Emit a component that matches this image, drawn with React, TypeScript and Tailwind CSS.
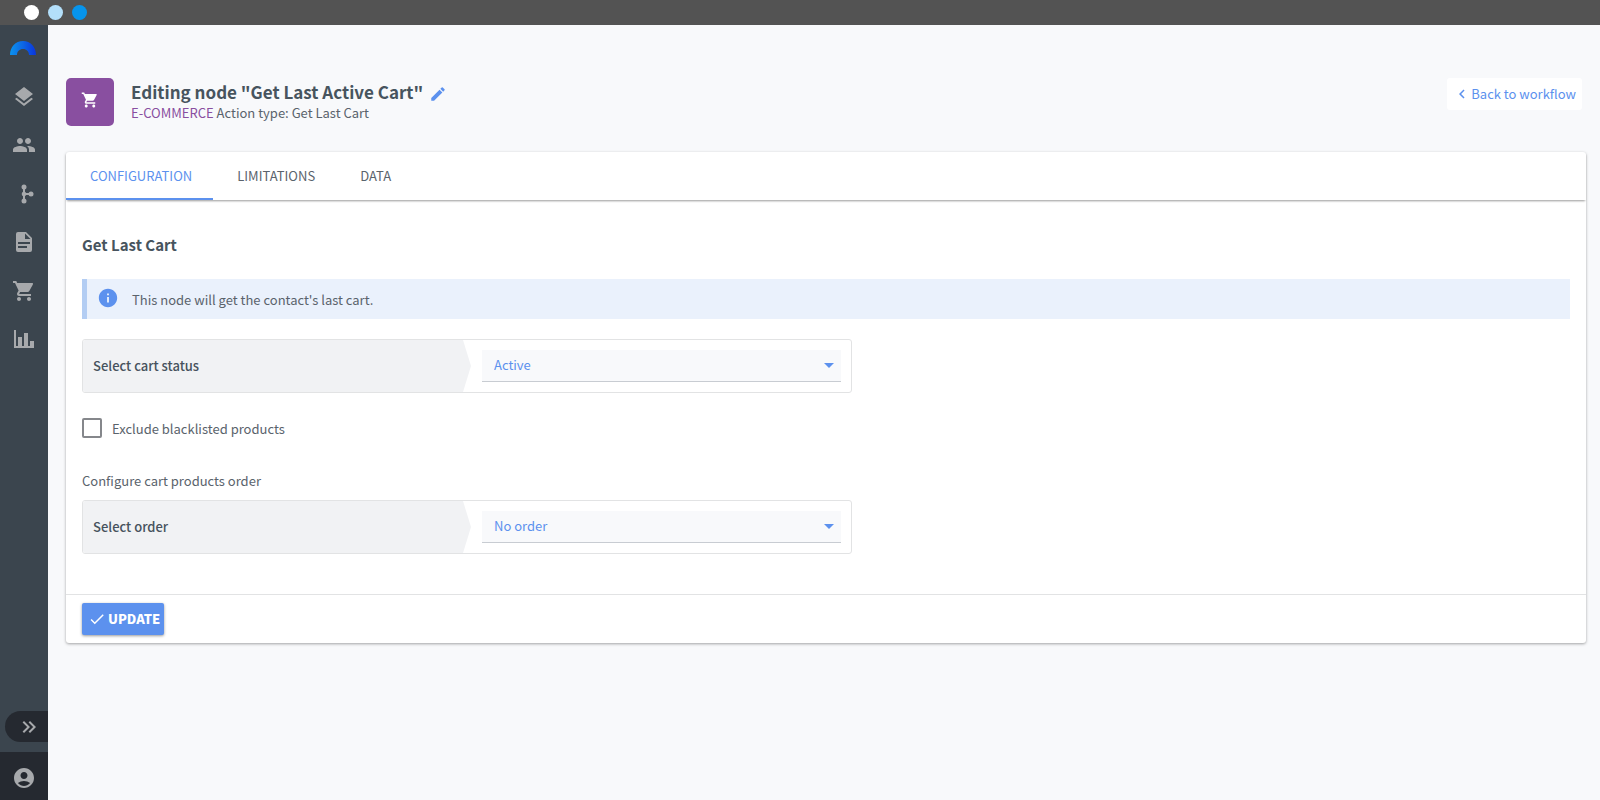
import React, { useState } from 'react';
import {
  MdAccountCircle,
  MdArrowDropDown,
  MdCheck,
  MdChevronLeft,
  MdEdit,
  MdInfo,
  MdLayers,
  MdPeople,
  MdShoppingCart
} from 'react-icons/md';

const Logo: React.FC = () => (
  <svg width="26" height="14" viewBox="0 0 26 14" aria-hidden="true">
    <defs>
      <linearGradient id="logo-arc" x1="0" y1="0" x2="1" y2="0">
        <stop offset="0" stopColor="#0b93ee" />
        <stop offset="0.5" stopColor="#0d66e4" />
        <stop offset="1" stopColor="#0a35dc" />
      </linearGradient>
    </defs>
    <path d="M0 14C0 6 5.5 0 13 0S26 6 26 14H19C19 10.500 16.500 8 13 8S7 10.500 7 14Z" fill="url(#logo-arc)" />
  </svg>
);

const BranchIcon: React.FC = () => (
  <svg width="24" height="24" viewBox="0 0 24 24" fill="currentColor" aria-hidden="true">
    <circle cx="12" cy="5" r="2.500" />
    <circle cx="12" cy="12" r="2.300" />
    <circle cx="12" cy="19" r="2.500" />
    <circle cx="19" cy="12" r="2.500" />
    <path d="M11 5h2v14h-2zM12 11h7v2h-7z" />
  </svg>
);

const DocumentIcon: React.FC = () => (
  <svg width="24" height="24" viewBox="0 0 24 24" fill="currentColor" aria-hidden="true">
    <path d="M13 9h5.500L13 3.500V9M6 2h8l6 6v12a2 2 0 0 1-2 2H6a2 2 0 0 1-2-2V4a2 2 0 0 1 2-2m9 16v-2H6v2h9m3-4v-2H6v2h12z" />
  </svg>
);

const ChartIcon: React.FC = () => (
  <svg width="24" height="24" viewBox="0 0 24 24" fill="currentColor" aria-hidden="true">
    <path d="M22 21H2V3h2v16h2v-9h4v9h2V6h4v13h2v-5h4v7z" />
  </svg>
);

const DoubleChevronIcon: React.FC = () => (
  <svg width="24" height="24" viewBox="0 0 24 24" fill="currentColor" aria-hidden="true">
    <path d="M5.590 7.410L7 6l6 6-6 6-1.410-1.410L10.170 12 5.590 7.410m6 0L13 6l6 6-6 6-1.410-1.410L16.170 12l-4.580-4.590z" />
  </svg>
);

const navItems = [
  { label: 'Content', icon: <MdLayers size={24} /> },
  { label: 'Contacts', icon: <MdPeople size={24} /> },
  { label: 'Workflows', icon: <BranchIcon /> },
  { label: 'Documents', icon: <DocumentIcon /> },
  { label: 'E-commerce', icon: <MdShoppingCart size={24} /> },
  { label: 'Analytics', icon: <ChartIcon /> }
];

const tabs = ['CONFIGURATION', 'LIMITATIONS', 'DATA'];

const Sidebar: React.FC = () => (
  <aside className="w-12 shrink-0 flex flex-col bg-[#3b454e] text-[#a7a9ac]">
    <a href="#home" aria-label="Home" className="mt-4 flex justify-center pr-[2px]">
      <Logo />
    </a>
    <nav className="mt-[30px] h-[266px] flex flex-col items-center justify-between">
      {navItems.map((item) => (
        <a key={item.label} href="#nav" aria-label={item.label}>
          {item.icon}
        </a>
      ))}
    </nav>
    <button
      aria-label="Expand menu"
      className="mt-auto mb-[10px] ml-[5px] h-[31px] flex items-center justify-center pl-1 rounded-l-full bg-[#252930]"
    >
      <DoubleChevronIcon />
    </button>
    <button aria-label="Account" className="h-12 pt-[3px] flex items-center justify-center bg-[#252930]">
      <MdAccountCircle size={24} />
    </button>
  </aside>
);

interface SelectRowProps {
  id: string;
  label: string;
  options: string[];
}

const SelectRow: React.FC<SelectRowProps> = ({ id, label, options }) => (
  <div className="flex max-w-[770px] h-[54px] border border-[#e2e3e4] rounded-[3px] overflow-hidden">
    <label
      htmlFor={id}
      className="w-[388px] shrink-0 flex items-center pl-[10px] bg-[#f1f2f4] font-medium text-[#47525d] [clip-path:polygon(0_0,calc(100%-8px)_0,100%_50%,calc(100%-8px)_100%,0_100%)]"
    >
      {label}
    </label>
    <div className="relative flex-1 my-[10px] ml-[11px] mr-[10px]">
      <select
        id={id}
        className="appearance-none w-full h-8 pb-[2px] pl-3 pr-8 bg-[#f8f9fb] border-b border-[#c8ccd2] text-[#5c91ee] outline-none"
      >
        {options.map((option) => (
          <option key={option}>{option}</option>
        ))}
      </select>
      <MdArrowDropDown size={24} className="absolute right-0 top-[3px] text-[#5c91ee] pointer-events-none" />
    </div>
  </div>
);

const App: React.FC = () => {
  const [activeTab, setActiveTab] = useState(tabs[0]);
  const [exclude, setExclude] = useState(false);

  return (
    <div className="min-h-screen flex flex-col bg-[#f8f9fb] text-[13px] leading-5 text-[#5a636c] font-['Noto_Sans_CJK_SC',sans-serif]">
      {/* window bar */}
      <div className="h-[25px] shrink-0 flex items-center gap-[9px] pl-6 bg-[#535353]">
        <span className="size-[15px] rounded-full bg-white" />
        <span className="size-[15px] rounded-full bg-[#b3dffa]" />
        <span className="size-[15px] rounded-full bg-[#0694ec]" />
      </div>

      <div className="flex-1 flex">
        <Sidebar />

        <main className="flex-1 min-w-0 pt-[53px] pl-[18px] pr-[14px]">
          <header className="flex items-start">
            <div className="size-12 shrink-0 flex items-center justify-center pb-1 rounded-[5px] bg-[#894fa0] text-white">
              <MdShoppingCart size={18} />
            </div>
            <div className="ml-[17px] flex-1">
              <div className="flex items-center gap-[6px] h-[27px]">
                <h1 className="text-[17px] leading-7 font-bold text-[#47545e]">
                  Editing node "Get Last Active Cart"
                </h1>
                <button aria-label="Rename node" className="pt-1 text-[#5c91ee]">
                  <MdEdit size={18} />
                </button>
              </div>
              <p className="leading-4">
                <span className="text-[#894fa0]">E-COMMERCE</span> Action type: Get Last Cart
              </p>
            </div>
            <a
              href="#workflow"
              className="mr-1 h-8 px-[6px] flex items-center rounded-[3px] bg-white text-[#5c91ee]"
            >
              <MdChevronLeft size={18} />
              Back to workflow
            </a>
          </header>

          <section className="mt-[26px] rounded-[3px] bg-white shadow-[0_1px_3px_rgba(0,0,0,0.35)]">
            <div role="tablist" className="flex h-12 shadow-[0_2px_2px_-1px_rgba(0,0,0,0.4)]">
              {tabs.map((tab) => (
                <button
                  key={tab}
                  role="tab"
                  aria-selected={tab === activeTab}
                  onClick={() => setActiveTab(tab)}
                  className={
                    tab === activeTab
                      ? 'pl-6 pr-[21px] pt-[2px] border-b-2 border-[#5c91ee] text-[#5c91ee]'
                      : 'pl-6 pr-[21px] pt-[2px] border-b-2 border-transparent'
                  }
                >
                  {tab}
                </button>
              ))}
            </div>

            <div className="px-4 pt-[33px] pb-10">
              <h2 className="text-[15px] leading-6 font-bold text-[#47545e]">Get Last Cart</h2>

              <div className="mt-[22px] h-10 flex items-center pt-[2px] pl-[10px] border-l-[5px] border-[#b3cdf3] bg-[#eaf1fc]">
                <MdInfo size={22} className="mb-1 text-[#5c91ee]" />
                <p className="ml-[13px]">This node will get the contact's last cart.</p>
              </div>

              <div className="mt-5">
                <SelectRow id="cart-status" label="Select cart status" options={['Active', 'Abandoned', 'Ordered']} />
              </div>

              <div className="mt-[25px] h-5 flex items-center gap-[10px]">
                <input
                  id="exclude"
                  type="checkbox"
                  checked={exclude}
                  onChange={(e) => setExclude(e.target.checked)}
                  className="appearance-none size-5 border-2 border-[#85878b] rounded-[2px] checked:bg-[#5c91ee]"
                />
                <label htmlFor="exclude" className="pt-[2px]">Exclude blacklisted products</label>
              </div>

              <p className="mt-[33px] mb-[9px]">Configure cart products order</p>
              <SelectRow id="order" label="Select order" options={['No order', 'Ascending', 'Descending']} />
            </div>

            <footer className="px-4 py-2 border-t border-[#e2e3e4]">
              <button className="h-8 pl-[6px] pr-1 flex items-center gap-[2px] rounded-[2px] bg-[#5c91ee] text-white font-black shadow-[0_1px_3px_rgba(0,0,0,0.4)]">
                <MdCheck size={18} />
                UPDATE
              </button>
            </footer>
          </section>
        </main>
      </div>
    </div>
  );
};

export default App;
